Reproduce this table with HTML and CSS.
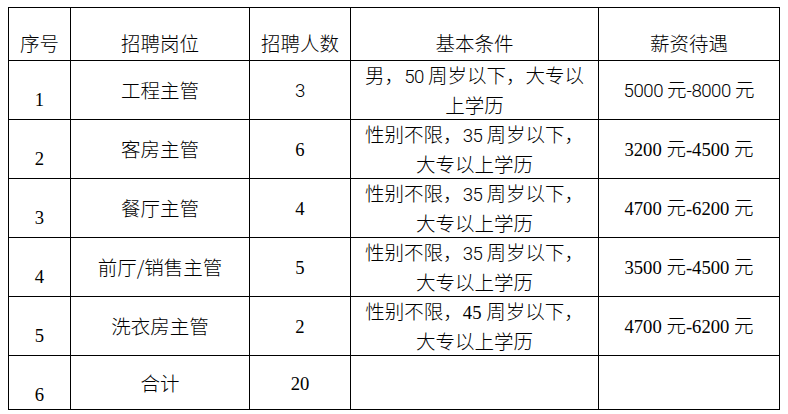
FILE: index.html
```html
<!DOCTYPE html>
<html lang="zh-CN">
<head>
<meta charset="utf-8">
<title>招聘岗位</title>
<link rel="stylesheet" href="styles.css">
</head>
<body>
<table class="jobs">
  <colgroup>
    <col class="c1"><col class="c2"><col class="c3"><col class="c4"><col class="c5">
  </colgroup>
  <tr class="head">
    <th>序号</th><th>招聘岗位</th><th>招聘人数</th><th>基本条件</th><th>薪资待遇</th>
  </tr>
  <tr>
    <td class="no"><span class="r">1</span></td>
    <td>工程主管</td>
    <td><span class="s">3</span></td>
    <td>男，<span class="s">50 </span>周岁以下，大专以<br>上学历</td>
    <td><span class="s">5000 </span>元<span class="s">-8000 </span>元</td>
  </tr>
  <tr>
    <td class="no"><span class="r">2</span></td>
    <td>客房主管</td>
    <td><span class="r">6</span></td>
    <td>性别不限，<span class="s">35 </span>周岁以下，<br>大专以上学历</td>
    <td><span class="r">3200 </span>元<span class="r">-4500 </span>元</td>
  </tr>
  <tr>
    <td class="no"><span class="r">3</span></td>
    <td>餐厅主管</td>
    <td><span class="r">4</span></td>
    <td>性别不限，<span class="s">35 </span>周岁以下，<br>大专以上学历</td>
    <td><span class="r">4700 </span>元<span class="r">-6200 </span>元</td>
  </tr>
  <tr>
    <td class="no"><span class="r">4</span></td>
    <td>前厅/销售主管</td>
    <td><span class="r">5</span></td>
    <td>性别不限，<span class="s">35 </span>周岁以下，<br>大专以上学历</td>
    <td><span class="r">3500 </span>元<span class="r">-4500 </span>元</td>
  </tr>
  <tr>
    <td class="no"><span class="r">5</span></td>
    <td>洗衣房主管</td>
    <td><span class="r">2</span></td>
    <td>性别不限，<span class="r">45 </span>周岁以下，<br>大专以上学历</td>
    <td><span class="r">4700 </span>元<span class="r">-6200 </span>元</td>
  </tr>
  <tr class="total">
    <td class="no"><span class="r">6</span></td>
    <td>合计</td>
    <td><span class="r">20</span></td>
    <td></td>
    <td></td>
  </tr>
</table>
</body>
</html>
```

FILE: styles.css
```css
html, body {
  margin: 0;
  padding: 0;
  background: #fff;
}
body {
  padding: 7px 0 0 8px;
  font-family: "Noto Sans CJK SC", sans-serif;
  font-size: 19.5px;
  font-weight: 300;
  color: #000;
}
.jobs {
  border-collapse: collapse;
  table-layout: fixed;
  width: 771px;
}
.c1 { width: 62px; }
.c2 { width: 179px; }
.c3 { width: 101px; }
.c4 { width: 248px; }
.c5 { width: 181px; }

.jobs th,
.jobs td {
  border: 1.5px solid #000;
  padding: 0 4px;
  text-align: center;
  vertical-align: middle;
  line-height: 28px;
  font-weight: 300;
  white-space: nowrap;
}
.jobs tr { height: 59px; }
.jobs tr.head,
.jobs tr.total { height: 53px; }

.jobs tr.head th {
  vertical-align: top;
  padding-top: 21px;
}
.jobs td.no {
  vertical-align: top;
  padding-top: 23px;
}
.r {
  font-family: "Liberation Serif", serif;
  font-size: 18.67px;
  font-weight: 400;
}
.s {
  font-family: Roboto, "Open Sans", "Liberation Sans", sans-serif;
  font-size: 18.67px;
  font-weight: 300;
  letter-spacing: -0.5px;
}
```
